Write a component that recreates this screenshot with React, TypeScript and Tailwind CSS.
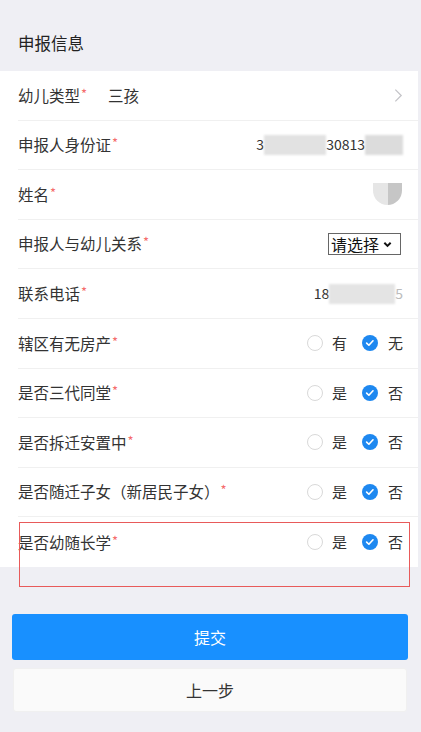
import React from "react";

const FONT = { fontFamily: '"Noto Sans CJK SC", "Noto Sans", sans-serif' };

function Star() {
  return <span className="relative -top-[3px] ml-[1px] text-[13px] text-[#f56c6c]">*</span>;
}

function Label({ text }: { text: string }) {
  return (
    <span className="shrink-0 text-[15.5px] text-[#333]">
      {text}
      <Star />
    </span>
  );
}

function Blur({ w, tone = "#e2e2e2" }: { w: number; tone?: string }) {
  return <span className="inline-block h-[20px] blur-[1px]" style={{ width: w, background: tone }} />;
}

function RadioPair({ yes, no }: { yes: string; no: string }) {
  return (
    <div className="flex items-center text-[15px] text-[#333]">
      <span className="h-[16px] w-[16px] rounded-full border border-[#d9d9d9] bg-white" />
      <span className="ml-[9px]">{yes}</span>
      <span className="ml-[15px] flex h-[16px] w-[16px] items-center justify-center rounded-full bg-[#1e88f0]">
        <svg viewBox="0 0 16 16" className="h-[12px] w-[12px]" fill="none">
          <path d="M3.5 8.2l3 2.8 5.5-6" stroke="#fff" strokeWidth="2.2" strokeLinecap="round" strokeLinejoin="round" />
        </svg>
      </span>
      <span className="ml-[10px]">{no}</span>
    </div>
  );
}

export default function App() {
  const radios = [
    { label: "辖区有无房产", yes: "有", no: "无" },
    { label: "是否三代同堂", yes: "是", no: "否" },
    { label: "是否拆迁安置中", yes: "是", no: "否" },
    { label: "是否随迁子女（新居民子女）", yes: "是", no: "否" },
    { label: "是否幼随长学", yes: "是", no: "否" },
  ];

  return (
    <div className="relative min-h-[732px] w-[421px] bg-[#efeff4]" style={FONT}>
      <div className="w-[418px]">
        <div className="flex h-[71px] items-center pl-[18px] pt-[16px] text-[16.5px] text-[#222]">申报信息</div>

        <div className="bg-white">
          <div className="divide-y divide-[#f0f0f0] [&>div]:ml-[18px]">
            <div className="flex h-[49.6px] items-center pr-[15px]">
              <Label text="幼儿类型" />
              <span className="ml-[21px] text-[15.5px] text-[#333]">三孩</span>
              <svg viewBox="0 0 10 16" className="ml-auto h-[15px] w-[9px]" fill="none">
                <path d="M1.5 1.5l6.5 6.5-6.5 6.5" stroke="#c4c4c8" strokeWidth="1.4" />
              </svg>
            </div>

            <div className="flex h-[49.6px] items-center pr-[15px]">
              <Label text="申报人身份证" />
              <div className="ml-auto flex items-center text-[14px] text-[#333]">
                <span>3</span>
                <Blur w={62} />
                <span>30813</span>
                <Blur w={38} tone="#dcdcdc" />
              </div>
            </div>

            <div className="flex h-[49.6px] items-center pr-[16px]">
              <Label text="姓名" />
              <div className="ml-auto flex h-[22px] w-[29px] overflow-hidden rounded-b-full rounded-t-[8px] blur-[0.6px]">
                <span className="w-1/2 bg-[#e6e6e6]" />
                <span className="w-1/2 bg-[#c6c6c6]" />
              </div>
            </div>

            <div className="flex h-[49.6px] items-center pr-[17px]">
              <Label text="申报人与幼儿关系" />
              <div className="ml-auto flex h-[22px] w-[73px] items-center border border-[#666] pl-[2px] text-[16px] text-[#111]">
                请选择
                <svg viewBox="0 0 10 10" className="ml-[4px] h-[9px] w-[9px]" fill="none">
                  <path d="M1.5 3l3.5 3.5L8.5 3" stroke="#111" strokeWidth="2.2" />
                </svg>
              </div>
            </div>

            <div className="flex h-[49.6px] items-center pr-[15px]">
              <Label text="联系电话" />
              <div className="ml-auto flex items-center text-[14px] text-[#333]">
                <span>18</span>
                <Blur w={66} tone="#e4e4e4" />
                <span className="text-[#bbb]">5</span>
              </div>
            </div>

            {radios.map((r) => (
              <div key={r.label} className="flex h-[49.6px] items-center justify-between pr-[15px]">
                <Label text={r.label} />
                <RadioPair yes={r.yes} no={r.no} />
              </div>
            ))}
          </div>
        </div>
      </div>

      <div className="mt-[47px] flex flex-col items-center gap-[8px] pl-[1px] pr-[2px]">
        <button className="h-[46px] w-[396px] rounded-[3px] bg-[#1890ff] text-[16px] text-white">提交</button>
        <button className="h-[44px] w-[394px] rounded-[3px] border border-[#f0f0f0] bg-[#fafafa] text-[16px] text-[#333]">
          上一步
        </button>
      </div>

      {/* annotation box drawn over the last row */}
      <div className="pointer-events-none absolute left-[19px] top-[522px] h-[65px] w-[391px] border border-[#e85a5a]" />
    </div>
  );
}
